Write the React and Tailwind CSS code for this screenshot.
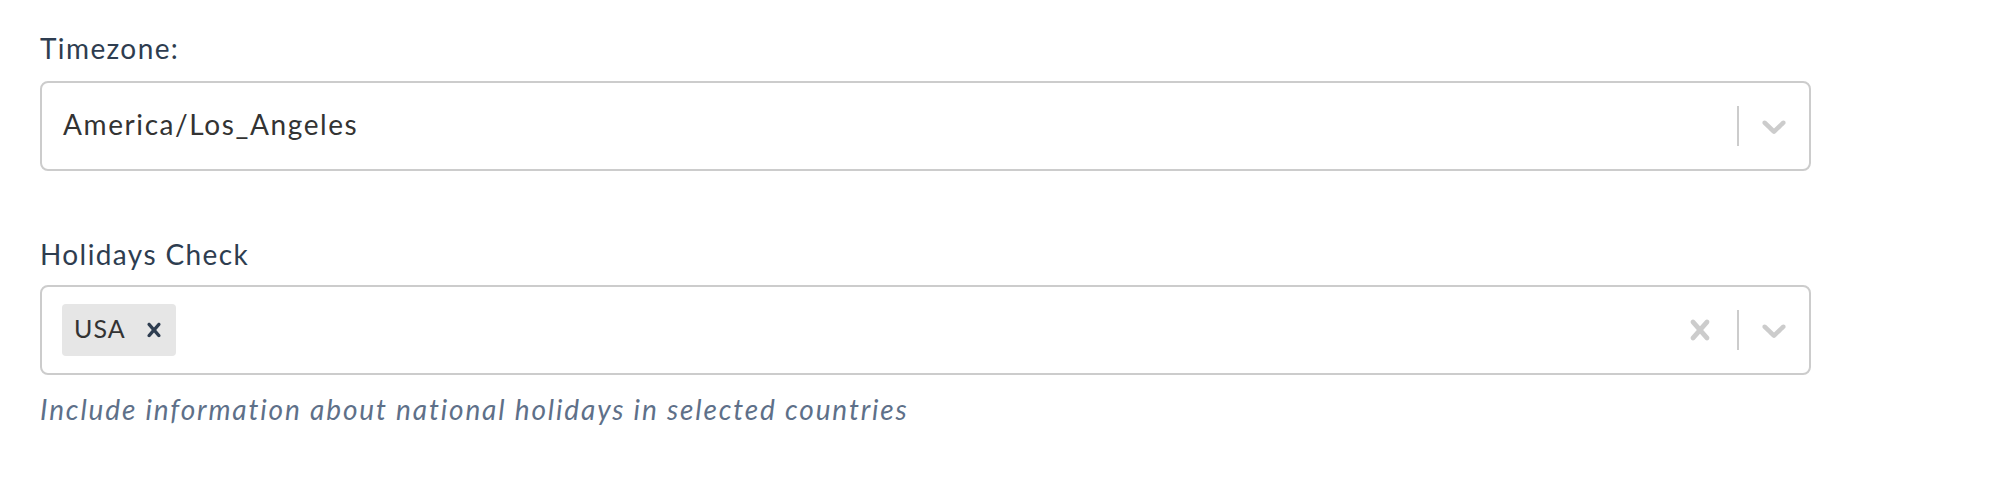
import React from "react";

const font = { fontFamily: '"Lato", "Open Sans", sans-serif' };

function Chevron() {
  return (
    <svg width="40" height="40" viewBox="0 0 20 20" fill="#cccccc" aria-hidden="true">
      <path d="M4.516 7.548c0.436-0.446 1.043-0.481 1.576 0l3.908 3.747 3.908-3.747c0.533-0.481 1.141-0.446 1.574 0 0.436 0.445 0.408 1.197 0 1.615-0.406 0.418-4.695 4.502-4.695 4.502-0.217 0.223-0.502 0.335-0.787 0.335s-0.57-0.112-0.789-0.335c0 0-4.287-4.084-4.695-4.502s-0.436-1.17 0-1.615z" />
    </svg>
  );
}

function Cross({ size = 40, color = "#cccccc" }) {
  return (
    <svg width={size} height={size} viewBox="0 0 20 20" fill={color} aria-hidden="true">
      <path d="M14.348 14.849c-0.469 0.469-1.229 0.469-1.697 0l-2.651-3.030-2.651 3.029c-0.469 0.469-1.229 0.469-1.697 0-0.469-0.469-0.469-1.229 0-1.697l2.758-3.15-2.759-3.152c-0.469-0.469-0.469-1.228 0-1.697s1.228-0.469 1.697 0l2.652 3.031 2.651-3.031c0.469-0.469 1.228-0.469 1.697 0s0.469 1.229 0 1.697l-2.758 3.152 2.758 3.15c0.469 0.469 0.469 1.229 0 1.698z" />
    </svg>
  );
}

function Separator() {
  return <span className="block w-[2px] h-[40px] bg-[#cccccc]" />;
}

export default function App() {
  return (
    <div className="bg-white w-[1990px] h-[480px]" style={font}>
      <div className="pl-[40px] pt-[31px] w-[1811px] flex flex-col">
        <label className="block text-[28px] leading-[34px] text-[#2e3d50] tracking-[1.4px]">Timezone:</label>
        <div className="mt-[16px] h-[90px] border-2 border-[#cccccc] rounded-[8px] flex items-center bg-white">
          <div className="flex-1 pl-[21px] pb-[4px] text-[28px] text-[#333333] tracking-[1.6px]">America/Los_Angeles</div>
          <Separator />
          <div className="w-[70px] flex items-center justify-center">
            <Chevron />
          </div>
        </div>

        <label className="block mt-[66px] text-[28px] leading-[34px] text-[#2e3d50] tracking-[1.4px]">Holidays Check</label>
        <div className="mt-[14px] h-[90px] border-2 border-[#cccccc] rounded-[8px] flex items-center bg-white">
          <div className="flex-1 pl-[20px] flex items-center">
            <div className="h-[52px] bg-[#e6e6e6] rounded-[4px] flex items-center">
              <span className="pl-[12px] pr-[6px] pb-[2px] text-[25px] text-[#333333] tracking-[1px]">USA</span>
              <span className="px-[8px] flex items-center">
                <Cross size={28} color="#2e3d50" />
              </span>
            </div>
          </div>
          <div className="w-[74px] flex items-center justify-center">
            <Cross />
          </div>
          <Separator />
          <div className="w-[70px] flex items-center justify-center">
            <Chevron />
          </div>
        </div>
        <p className="mt-[17px] text-[28px] leading-[34px] italic text-[#5e7089] tracking-[1.85px]">
          Include information about national holidays in selected countries
        </p>
      </div>
    </div>
  );
}
